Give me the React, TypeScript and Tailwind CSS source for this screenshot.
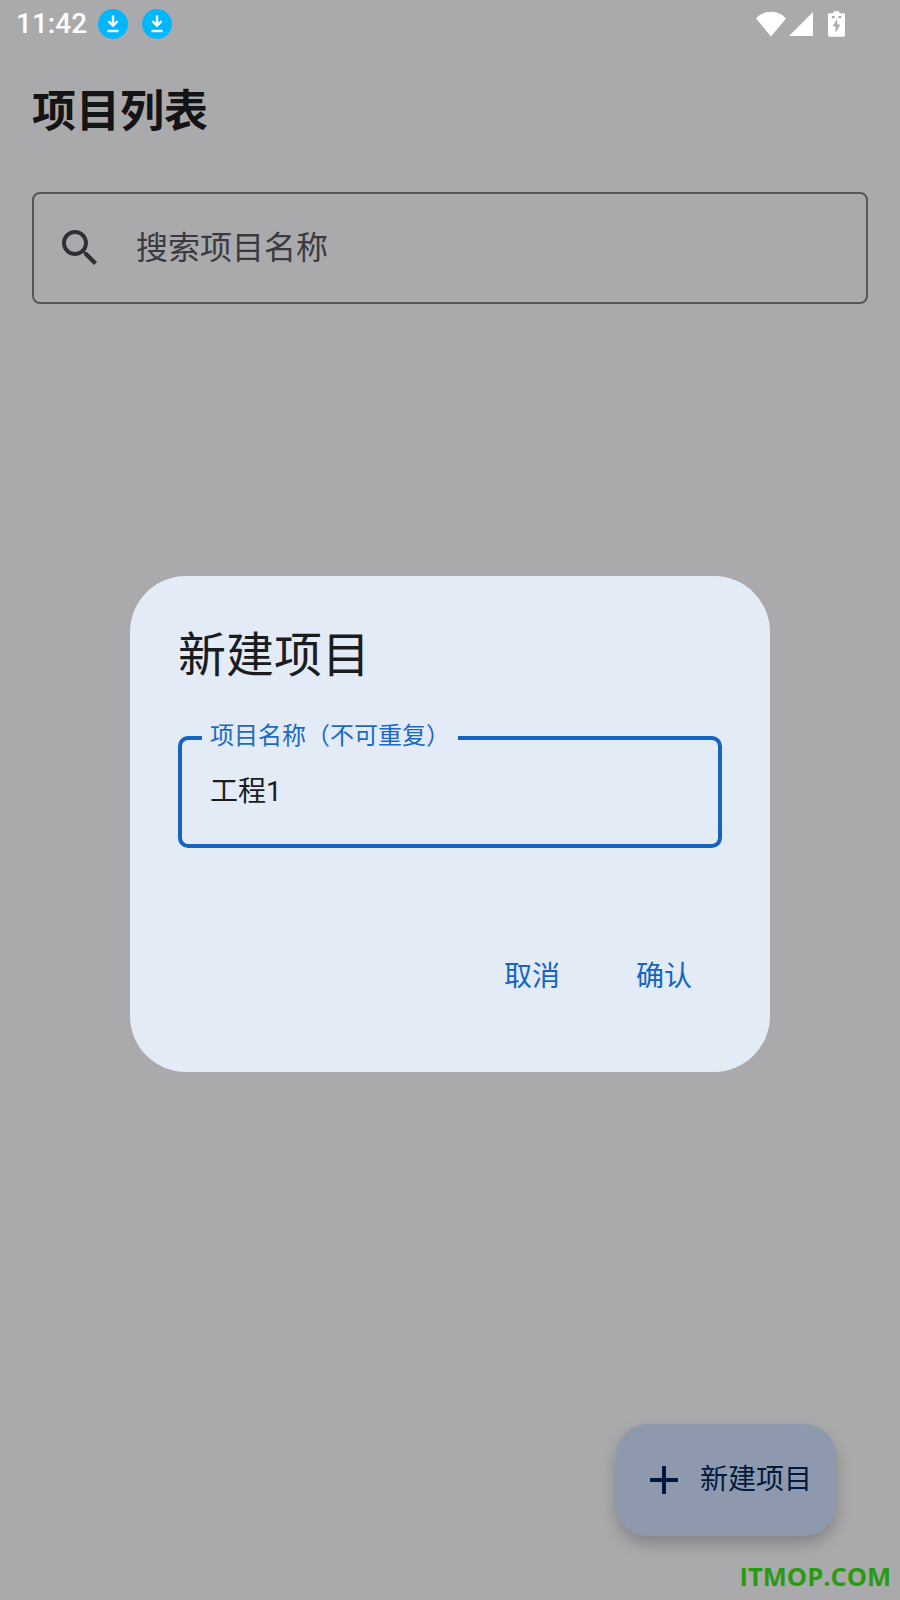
const font = { cjk: "font-['Roboto','Noto_Sans_CJK_SC',sans-serif]" }

function DownloadBadge() {
  return (
    <div className="w-[30px] h-[30px] rounded-full bg-[#00b7ff] flex items-center justify-center">
      <svg width="16" height="20" viewBox="0 0 16 20" fill="none" stroke="#fff" strokeWidth="2.4">
        <path d="M8 1.5v9.5" />
        <path d="M3.4 7.2 8 11.6l4.6-4.4" />
        <path d="M2.5 17h11" />
      </svg>
    </div>
  )
}

function StatusIcons() {
  return (
    <div className="flex items-center">
      <svg width="30" height="26" viewBox="0 0 30 26" fill="#fff">
        <path d="M0 7.5C3.8 3.2 9 .8 15 .8s11.200 2.400 15 6.700L15 25.500z" />
      </svg>
      <svg width="26" height="26" viewBox="0 0 26 26" fill="#fff" className="ml-[2px]">
        <path d="M25 1v24H1z" />
      </svg>
      <svg width="17" height="26" viewBox="0 0 18 27" className="ml-[14px] mr-[55px]">
        <path fill="#fff" fillRule="evenodd" d="M6 0h6v2h4.500q1.500 0 1.500 1.500v22q0 1.500-1.500 1.500h-15Q0 27 0 25.500v-22Q0 2 1.500 2H6zM4 5v2.500h3V5zm7 0v2.500h3V5zM9.800 8 5 16h3v7l5-9h-3.200z" />
      </svg>
    </div>
  )
}

export default function App() {
  return (
    <div className={`relative w-[900px] h-[1600px] overflow-hidden bg-[#aaaaac] ${font.cjk}`}>
      {/* Status bar */}
      <div className="h-[48px] flex items-center justify-between pl-[16px]">
        <div className="flex items-center">
          <span className="text-[28px] leading-[48px] font-medium text-white">11:42</span>
          <div className="ml-[11px] flex gap-[14px]">
            <DownloadBadge />
            <DownloadBadge />
          </div>
        </div>
        <StatusIcons />
      </div>

      {/* Page content */}
      <div className="px-[32px]">
        <h1 className="mt-[40px] h-[48px] text-[44px] leading-[48px] font-bold text-[#141416]">项目列表</h1>
        <div className="mt-[56px] h-[112px] border-2 border-[#55555c] rounded-[8px] flex items-center pl-[22px]">
          <svg width="48" height="48" viewBox="0 0 24 24" fill="#2f3036">
            <path d="M15.500 14h-.79l-.28-.27C15.410 12.590 16 11.110 16 9.500 16 5.910 13.090 3 9.500 3S3 5.910 3 9.500 5.910 16 9.500 16c1.610 0 3.090-.59 4.230-1.570l.27.28v.79l5 4.990L20.490 19l-4.990-5zm-6 0C7.010 14 5 11.990 5 9.500S7.010 5 9.500 5 14 7.010 14 9.500 11.990 14 9.500 14z" />
          </svg>
          <span className="ml-[32px] text-[32px] text-[#3a3a40]">搜索项目名称</span>
        </div>
      </div>

      {/* Dialog */}
      <div className="absolute inset-0 flex justify-center items-start pt-[576px]">
        <div className="w-[640px] h-[496px] rounded-[56px] bg-[#e3ebf7] px-[48px] flex flex-col">
          <h2 className="mt-[52px] text-[48px] leading-[56px] font-normal text-[#1a1c20]">新建项目</h2>
          <div className="relative mt-[52px] h-[112px] border-4 border-[#1565c0] rounded-[10px] flex items-center pl-[28px]">
            <span className="absolute left-[20px] top-[-18px] bg-[#e3ebf7] px-[8px] text-[24px] leading-[28px] text-[#1a6ac4]">
              项目名称（不可重复）
            </span>
            <span className="text-[28px] text-[#1a1c20]">工程1</span>
          </div>
          <div className="mt-[97px] flex justify-end gap-[20px] pr-[30px] text-[28px] leading-[64px] text-[#1565c0]">
            <span className="px-[28px]">取消</span>
            <span className="pl-[28px]">确认</span>
          </div>
        </div>
      </div>

      {/* FAB */}
      <div className="absolute left-[616px] top-[1424px] w-[220px] h-[112px] rounded-[32px] bg-[#8f99ae] shadow-[0_8px_16px_rgba(0,0,0,0.22)] flex items-center pl-[24px] text-[#001a3d]">
        <svg width="48" height="48" viewBox="0 0 24 24" fill="currentColor">
          <path d="M19 13h-6v6h-2v-6H5v-2h6V5h2v6h6v2z" />
        </svg>
        <span className="ml-[12px] text-[28px]">新建项目</span>
      </div>

      {/* Watermark */}
      <div className="absolute right-[9px] top-[1560px] text-[25.5px] leading-[32px] font-bold text-[#2a9a10] font-['Open_Sans',sans-serif]">
        ITMOP.COM
      </div>
    </div>
  )
}
